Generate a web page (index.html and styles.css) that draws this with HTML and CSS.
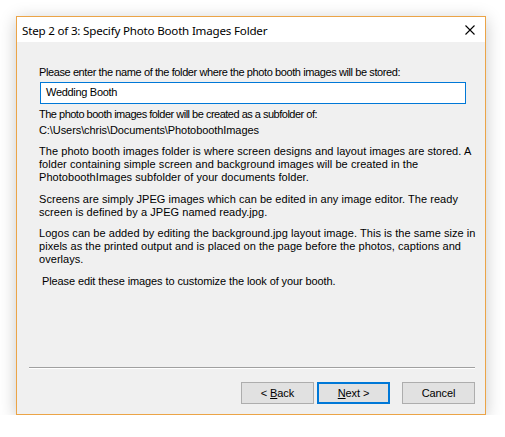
FILE: index.html
```html
<!DOCTYPE html>
<html>
<head>
<meta charset="utf-8">
<link rel="stylesheet" href="styles.css">
</head>
<body>
<div class="window">
  <div class="titlebar">
    <span class="title">Step 2 of 3: Specify Photo Booth Images Folder</span>
    <svg class="close" width="10" height="10" viewBox="0 0 10 10"><path d="M0.5 0.5 L9.5 9.5 M9.5 0.5 L0.5 9.5" stroke="#000" stroke-width="1.1" fill="none"/></svg>
  </div>
  <div class="content">
    <p class="prompt">Please enter the name of the folder where the photo booth images will be stored:</p>
    <div class="input">Wedding Booth</div>
    <p class="sub">The photo booth images folder will be created as a subfolder of:</p>
    <p class="path">C:\Users\chris\Documents\PhotoboothImages</p>
    <p class="para p3">The photo booth images folder is where screen designs and layout images are stored. A<br>folder containing simple screen and background images will be created in the<br>PhotoboothImages subfolder of your documents folder.</p>
    <p class="para p4">Screens are simply JPEG images which can be edited in any image editor. The ready<br>screen is defined by a JPEG named ready.jpg.</p>
    <p class="para p5">Logos can be added by editing the background.jpg layout image. This is the same size in<br>pixels as the printed output and is placed on the page before the photos, captions and<br>overlays.</p>
    <p class="p6">Please edit these images to customize the look of your booth.</p>
  </div>
  <div class="footer">
    <div class="separator"></div>
    <div class="buttons">
      <button class="btn">&lt; <u>B</u>ack</button>
      <button class="btn default"><u>N</u>ext &gt;</button>
      <button class="btn cancel">Cancel</button>
    </div>
  </div>
</div>
</body>
</html>
```
FILE: styles.css
```css
html, body {
  margin: 0;
  padding: 0;
  background: #ffffff;
}
body {
  padding: 16px 0 0 16px;
  font-family: "Liberation Sans", Arial, sans-serif;
  font-size: 11px;
  color: #000;
}
.window {
  width: 468px;
  height: 397px;
  border: 1px solid #eba447;
  background: #f0f0f0;
  box-shadow: 0 3px 16px rgba(0, 0, 0, 0.22);
  display: flex;
  flex-direction: column;
}
.titlebar {
  height: 25px;
  background: #ffffff;
  display: flex;
  align-items: center;
  padding: 0 10px 0 5px;
}
.title {
  flex: 1;
  font-family: "Noto Sans", sans-serif;
  font-size: 11.6px;
  letter-spacing: -0.2px;
  padding-top: 1px;
}
.close {
  display: block;
  margin-top: 1px;
}
.content {
  flex: 1;
  padding: 0 0 0 22px;
}
.content p {
  margin: 0;
  line-height: 13px;
  white-space: nowrap;
}
.prompt {
  margin-top: 24px !important;
  letter-spacing: -0.4px;
}
.input {
  margin-top: 3px;
  width: 419px;
  height: 20px;
  border: 1px solid #0078d7;
  background: #ffffff;
  box-sizing: content-box;
  padding: 0 0 0 5px;
  line-height: 19px;
  margin-left: 1px;
  letter-spacing: -0.3px;
}
.sub {
  margin-top: 4px !important;
  letter-spacing: -0.5px;
}
.path {
  margin-top: 3px !important;
  letter-spacing: -0.08px;
}
.para {
  letter-spacing: 0.05px;
}
.p3 {
  margin-top: 8px !important;
}
.p4 {
  margin-top: 9px !important;
}
.p5 {
  margin-top: 8px !important;
}
.p6 {
  margin-top: 9px !important;
  padding-left: 3px;
  letter-spacing: -0.1px;
}
.footer {
  padding: 0 10px 10px 12px;
}
.separator {
  height: 1px;
  background: #a0a0a0;
  border-bottom: 1px solid #ffffff;
}
.buttons {
  display: flex;
  justify-content: flex-end;
  margin-top: 13px;
  gap: 3px;
}
.btn {
  width: 73px;
  height: 22px;
  padding: 0;
  margin: 0;
  border: 1px solid #adadad;
  background: #e1e1e1;
  font-family: "Liberation Sans", Arial, sans-serif;
  font-size: 11px;
  letter-spacing: -0.1px;
  color: #000;
}
.btn.default {
  border: 2px solid #0078d7;
}
.btn.cancel {
  margin-left: 9px;
}
```
